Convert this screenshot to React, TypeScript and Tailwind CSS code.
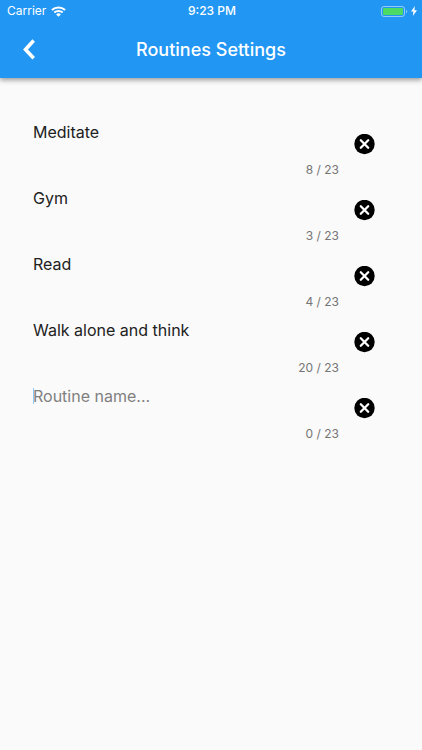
import React, { useState } from "react";

const MAX_LENGTH = 23;

type Routine = { id: number; name: string };

const initialRoutines: Routine[] = [
  { id: 1, name: "Meditate" },
  { id: 2, name: "Gym" },
  { id: 3, name: "Read" },
  { id: 4, name: "Walk alone and think" },
  { id: 5, name: "" },
];

function StatusBar() {
  return (
    <div className="grid h-[22px] grid-cols-3 items-center pl-[7px] pr-[5px] text-xs">
      <div className="flex items-center gap-[5px]">
        <span>Carrier</span>
        <svg className="h-[11px] w-[15px]" viewBox="0 0 15 11" fill="none" stroke="currentColor" strokeWidth="2">
          <path d="M0.9 4.1a9.6 9.6 0 0 1 13.2 0" />
          <path d="M3.3 6.6a6.1 6.1 0 0 1 8.4 0" />
          <path d="M7.5 10.8 5.1 8.4a3.4 3.4 0 0 1 4.8 0z" fill="currentColor" stroke="none" />
        </svg>
      </div>
      <span className="text-center font-medium">9:23 PM</span>
      <div className="flex items-center justify-end gap-[3px]">
        <svg className="h-[11px] w-[27px]" viewBox="0 0 27 11">
          <rect x="0.5" y="0.5" width="23" height="10" rx="2.5" fill="none" stroke="#fff" strokeOpacity="0.5" />
          <rect x="2" y="2" width="20" height="7" rx="1" fill="#4cd964" />
          <path d="M25 3.7a2 2 0 0 1 0 3.6z" fill="#fff" fillOpacity="0.5" />
        </svg>
        <svg className="h-[10px] w-[6px]" viewBox="0 0 6 10" fill="currentColor">
          <path d="M3.9 0 0 5.6h2.4L1.8 10 6 4.2H3.4z" />
        </svg>
      </div>
    </div>
  );
}

function RoutineRow({
  routine,
  focused,
  onChange,
  onRemove,
}: {
  routine: Routine;
  focused: boolean;
  onChange: (name: string) => void;
  onRemove: () => void;
}) {
  return (
    <li className="flex items-center gap-[15px]">
      <div className="relative flex flex-1 flex-col gap-[18px] pt-[9px]">
        <input
          type="text"
          aria-label="Routine name"
          placeholder="Routine name..."
          maxLength={MAX_LENGTH}
          value={routine.name}
          onChange={(e) => onChange(e.target.value)}
          className="h-6 w-full bg-transparent text-base text-[#212121] caret-[#2196f3] outline-none placeholder:text-[#808080]"
        />
        {/* Resting caret for the empty field */}
        {focused && <span className="absolute left-0 top-[13px] h-4 w-px bg-[#90caf9]" />}
        <span className="text-right text-xs leading-[15px] text-[#757575]">
          {routine.name.length} / {MAX_LENGTH}
        </span>
      </div>
      <button type="button" aria-label="Remove routine" onClick={onRemove} className="shrink-0">
        <svg className="h-[21px] w-[21px]" viewBox="0 0 21 21">
          <circle cx="10.5" cy="10" r="10.2" fill="#000" />
          <path d="M6.8 6.3l7.4 7.4M14.2 6.3l-7.4 7.4" stroke="#fff" strokeWidth="2.3" strokeLinecap="round" />
        </svg>
      </button>
    </li>
  );
}

export default function App() {
  const [routines, setRoutines] = useState<Routine[]>(initialRoutines);

  const rename = (id: number, name: string) => {
    setRoutines((prev) => prev.map((r) => (r.id === id ? { ...r, name } : r)));
  };

  const remove = (id: number) => {
    setRoutines((prev) => prev.filter((r) => r.id !== id));
  };

  return (
    <div className="min-h-screen bg-[#fafafa] font-[Inter,sans-serif]">
      <header className="bg-[#2196f3] text-white shadow-[0_2px_5px_rgba(0,0,0,0.4)]">
        <StatusBar />
        <div className="grid h-14 grid-cols-[58px_1fr_58px] items-center">
          <button type="button" aria-label="Back" className="flex justify-center">
            <svg className="h-[22px] w-3" viewBox="0 0 12 22" fill="none" stroke="currentColor" strokeWidth="3.6">
              <path d="M10.7 1.6 2.5 10.4l8.2 8.8" />
            </svg>
          </button>
          <h1 className="text-center text-lg font-medium">Routines Settings</h1>
        </div>
      </header>

      <main className="px-[33px] pt-[33px]">
        <ul className="pr-[14px]">
          {routines.map((routine) => (
            <RoutineRow
              key={routine.id}
              routine={routine}
              focused={routine.name === ""}
              onChange={(name) => rename(routine.id, name)}
              onRemove={() => remove(routine.id)}
            />
          ))}
        </ul>
      </main>
    </div>
  );
}
